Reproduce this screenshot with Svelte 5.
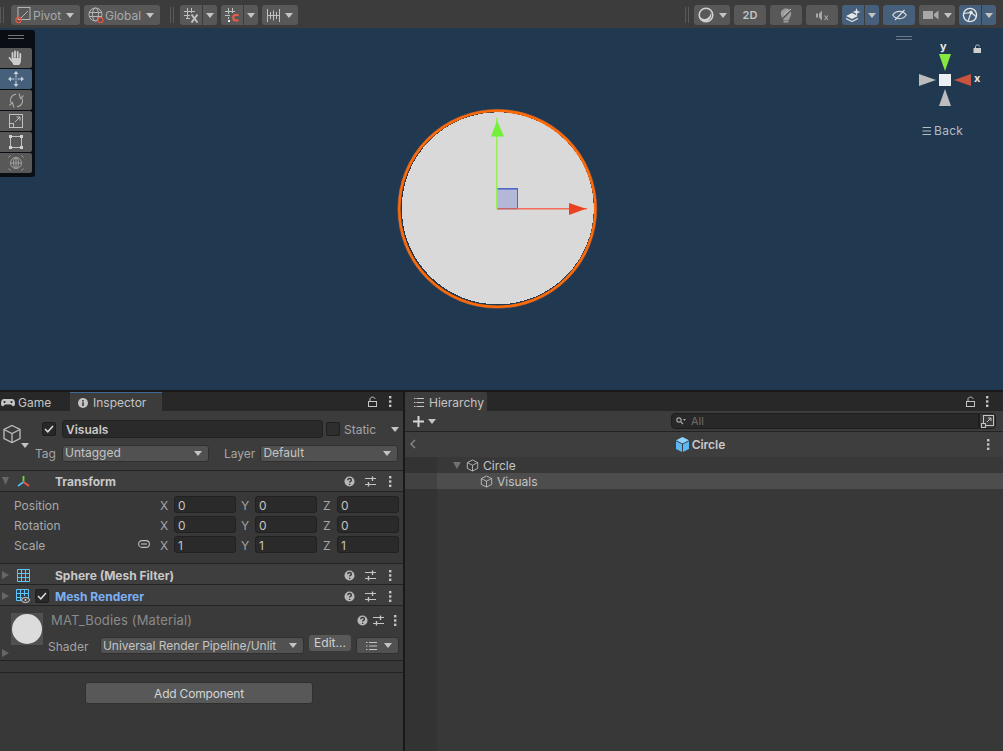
<script>
  const rows = [
    { label: 'Position', vals: ['0', '0', '0'] },
    { label: 'Rotation', vals: ['0', '0', '0'] },
    { label: 'Scale', vals: ['1', '1', '1'], link: true }
  ];
  const axes = ['X', 'Y', 'Z'];
</script>

{#snippet caret(color = '#c4c4c4')}
  <svg class="caret" width="8" height="5" viewBox="0 0 8 5"><path d="M0 0H8L4 5Z" fill={color} /></svg>
{/snippet}

{#snippet cube(size = 15, color = '#c4c4c4')}
  <svg width={size} height={size} viewBox="0 0 20 20" fill="none" stroke={color} stroke-width="1.3">
    <path d="M10 1.5L18 5.5V14.5L10 18.5L2 14.5V5.5Z" />
    <path d="M2 5.5L10 9.5L18 5.5M10 9.5V18.5" />
  </svg>
{/snippet}

{#snippet headerIcons()}
  <span class="hicons">
    <svg width="11" height="11" viewBox="0 0 11 11"><circle cx="5.5" cy="5.5" r="5" fill="#b8b8b8" /><path d="M3.7 4.2C3.8 2 7.4 2 7.4 4.2C7.4 5.4 5.6 5.4 5.6 6.6M5.6 7.8V9" stroke="#383838" stroke-width="1.4" fill="none" /></svg>
    <svg width="11" height="11" viewBox="0 0 11 11" stroke="#c4c4c4" stroke-width="1" fill="none"><path d="M0 2.5H11M0 8.5H11" /><path d="M7.5 0.5V5M3.5 6V10.5" stroke-width="1.4" /></svg>
    <svg class="hdots" width="3" height="11" viewBox="0 0 3 11" fill="#c4c4c4"><rect y="0" width="2.4" height="2.4" /><rect y="4.3" width="2.4" height="2.4" /><rect y="8.6" width="2.4" height="2.4" /></svg>
  </span>
{/snippet}

{#snippet lock()}
  <svg width="9" height="11" viewBox="0 0 9 11" fill="none" stroke="#c4c4c4"><path d="M2 5V3C2 0.5 7 0.5 7 3" /><rect x="0.5" y="5.5" width="8" height="5" /></svg>
{/snippet}

{#snippet vdots()}
  <svg width="3" height="11" viewBox="0 0 3 11" fill="#c4c4c4"><rect width="2.4" height="2.4" /><rect y="4.3" width="2.4" height="2.4" /><rect y="8.6" width="2.4" height="2.4" /></svg>
{/snippet}

{#snippet check()}
  <svg width="10" height="8" viewBox="0 0 10 8" fill="none" stroke="#dcdcdc" stroke-width="1.5"><path d="M1 4L3.8 6.8L9 1" /></svg>
{/snippet}

<div class="app">
  <header class="toolbar">
    <span class="grip"></span>
    <button class="btn pivot">
      <svg width="16" height="18" viewBox="0 0 16 18" fill="none"><rect x="3" y="1.5" width="12" height="12" stroke="#b5b5b5" /><path d="M4 14L13 5" stroke="#b5b5b5" /><circle cx="3.5" cy="14" r="2.6" stroke="#e8553f" stroke-width="1.2" /></svg>
      <span>Pivot</span>{@render caret()}
    </button>
    <button class="btn global">
      <svg width="16" height="17" viewBox="0 0 16 17" fill="none" stroke="#b5b5b5"><circle cx="7.5" cy="7.5" r="6.5" /><ellipse cx="7.5" cy="7.5" rx="3" ry="6.5" /><path d="M1 5.5H14M1 9.5H14" /><circle cx="12.5" cy="13" r="2.5" fill="#555" stroke="#e8553f" stroke-width="1.2" /></svg>
      <span>Global</span>{@render caret()}
    </button>
    <span class="grip g2"></span>
    <div class="split">
      <button class="btn part main">
        <svg width="15" height="15" viewBox="0 0 15 15" fill="none" stroke="#c0c0c0"><path d="M0 3.5H11M0 7.5H6M3.5 0V11M7.5 0V5M2 10.5H6" /><path d="M7.5 6.5L13.5 14.500M13.500 6.5L7.5 14.500" stroke-width="2" /></svg>
      </button>
      <button class="btn part drop">{@render caret()}</button>
    </div>
    <div class="split">
      <button class="btn part main">
        <svg width="15" height="15" viewBox="0 0 15 15" fill="none" stroke="#c0c0c0"><path d="M0 3.5H10M0 7.5H5M3.5 0V6M7.5 0V5M3.5 9V11" /><rect x="3" y="12" width="2" height="2" fill="#eee" stroke="none" /><path d="M13.5 7H10.5C7.5 7 7.5 12.5 10.5 12.5H13.5" stroke="#ef5b44" stroke-width="2" /></svg>
      </button>
      <button class="btn part drop">{@render caret()}</button>
    </div>
    <button class="btn ruler">
      <svg width="13" height="13" viewBox="0 0 13 13" fill="none" stroke="#c0c0c0"><path d="M.5 0V13M12.5 0V13M0 6.5H13M3.5 3V10M6.5 1.5V11.5M9.5 3V10" /></svg>
      {@render caret()}
    </button>

    <span class="spacer"></span>

    <span class="grip g3"></span>
    <button class="btn shade">
      <svg width="16" height="16" viewBox="0 0 16 16"><circle cx="8" cy="8" r="6.8" fill="none" stroke="#d0d0d0" stroke-width="1.6" /><path d="M1.5 9C4 14 12 13 13 5C14.5 10 11 15 7 14.5C4 14 2.5 12 1.5 9Z" fill="#d0d0d0" /></svg>
      {@render caret()}
    </button>
    <button class="btn icon two">2D</button>
    <button class="btn icon">
      <svg width="12" height="15" viewBox="0 0 12 15"><path d="M3 12C2.5 9 .8 8.5 .8 5.5C.8 2 4 .5 6 .5C9 .5 11.2 3 11.2 5.5C11.2 8.5 9.5 9 9 12Z" fill="#9c9c9c" /><rect x="3.5" y="12.5" width="5" height="2" fill="#9c9c9c" /><path d="M1 12.5L11 2" stroke="#555" stroke-width="1.6" /><path d="M4 6.5L11 1" stroke="#c8c8c8" /></svg>
    </button>
    <button class="btn icon">
      <svg width="13" height="11" viewBox="0 0 13 11"><path d="M0 3.5H2V7.5H0ZM3 3.5L6 .5V10.5L3 7.5Z" fill="#a8a8a8" /><path d="M8.5 5.5L12 10M12 5.5L8.5 10" stroke="#a8a8a8" stroke-width="1.1" /></svg>
    </button>
    <div class="split">
      <button class="btn part main blue">
        <svg width="16" height="14" viewBox="0 0 16 14"><path d="M1 8L7 5L13 8L7 11Z" fill="#e6e6e6" /><path d="M1 10.5L7 13.5L13 10.5" stroke="#e6e6e6" stroke-width="1.2" fill="none" /><path d="M11.5 0L12.5 3L15.5 4L12.5 5L11.5 8L10.5 5L7.5 4L10.5 3Z" fill="#e6e6e6" /></svg>
      </button>
      <button class="btn part drop blue">{@render caret()}</button>
    </div>
    <button class="btn icon blue">
      <svg width="15" height="12" viewBox="0 0 15 12" fill="none" stroke="#dcdcdc" stroke-width="1.1"><path d="M.7 6C4 1.2 11 1.2 14.3 6C11 10.8 4 10.8 .7 6Z" /><path d="M3 11L12.5 1" /></svg>
    </button>
    <button class="btn cam">
      <svg width="16" height="10" viewBox="0 0 16 10"><rect x="0" y="1" width="10" height="8" fill="#a8a8a8" /><path d="M11 4L15.5 .5V9.5L11 6Z" fill="#a8a8a8" /></svg>
      {@render caret()}
    </button>
    <div class="split">
      <button class="btn part main blue">
        <svg width="16" height="16" viewBox="0 0 16 16" fill="none" stroke="#e4e4e4"><circle cx="8" cy="8" r="6.6" stroke-width="1.4" /><path d="M2 6.5L9 5.5L14 9.5M9 5.5L6 14.5" stroke-width="1.2" /><circle cx="9" cy="5.5" r="1.4" fill="#e4e4e4" /></svg>
      </button>
      <button class="btn part drop blue">{@render caret()}</button>
    </div>
  </header>

  <main class="scene">
    <svg class="canvas" width="1003" height="362" viewBox="0 28 1003 362">
      <circle cx="497.3" cy="208.8" r="99.400" fill="none" stroke="#a8604a" stroke-opacity=".7" />
      <circle cx="497.800" cy="208.300" r="96" fill="#d9d9d9" shape-rendering="crispEdges" />
      <circle cx="497.3" cy="208.8" r="98" fill="none" stroke="#ff6a08" stroke-width="2.600" />
      <rect x="497" y="188.500" width="20.500" height="20.500" fill="#b4b8d8" />
      <path d="M517.500 188.500V209" fill="none" stroke="#4c68c8" />
      <path d="M497 188.800H518" stroke="#4c68c8" stroke-width="1.600" />
      <path d="M497 208.800H517" stroke="#c46060" stroke-width="1.500" />
      <path d="M517 208.800H587" stroke="#f56c58" stroke-width="1.500" />
      <path d="M569 203L586 208.800L569 215Z" fill="#ea4220" />
      <path d="M496.800 209V118" stroke="#96f050" stroke-width="1.500" />
      <path d="M497 120.500L504 136.500H491Z" fill="#74f03a" />

      <path d="M896 36.5H912M896 39.5H912" stroke="#6c7c8c" />
      <path d="M945 71L939 54H951Z" fill="#86e840" />
      <path d="M919 74L936 80L919 86Z" fill="#bdbdbd" />
      <path d="M971 74L954 80L971 86Z" fill="#c85440" />
      <path d="M945 89L951 106H939Z" fill="#bdbdbd" />
      <rect x="939" y="74" width="12" height="12" fill="#eceff2" />
      <path d="M922.500 127.500H931M922.500 131H931M922.500 134.500H931" stroke="#b4bcc4" />
      <rect x="973.500" y="48" width="7.500" height="5" fill="#d0d0d0" />
      <path d="M975.500 48V46.500C975.500 44.500 979.500 44.500 979.500 46.500" fill="none" stroke="#d0d0d0" />
    </svg>
    <span class="gz y">y</span>
    <span class="gz x">x</span>
    <span class="back">Back</span>

    <nav class="tools">
      <div class="tools-grip"></div>
      <button class="tool">
        <svg width="16" height="16" viewBox="0 0 16 16" fill="none" stroke="#cccccc" stroke-linecap="round" stroke-width="1.800"><path d="M1.500 8L4 11M4.500 8V3M7 7V1.500M9.700 7V2M12.300 8V4" /><path d="M4 8H13V10C13 13 12 14 11 15H5.500L3.500 11Z" fill="#cccccc" stroke="none" /></svg>
      </button>
      <button class="tool on">
        <svg width="16" height="16" viewBox="0 0 16 16"><path d="M8 2.500V6M8 10V13.500M2.500 8H6M10 8H13.500" stroke="#c8d0d8" fill="none" /><path d="M8 0L10.500 3H5.500ZM8 16L5.500 13H10.500ZM0 8L3 5.500V10.500ZM16 8L13 5.500V10.500Z" fill="#c8d0d8" /><rect x="6.500" y="6.500" width="3" height="3" fill="#6f8cae" /></svg>
      </button>
      <button class="tool">
        <svg width="15" height="15" viewBox="0 0 15 15" fill="none" stroke="#a8a8a8" stroke-width="1.100"><path d="M2.500 10.500A6 6 0 0 1 7 1.200" /><path d="M12.500 4.500A6 6 0 0 1 8 13.800" /><path d="M10 0.500L11.500 5.500L14.500 2.500M0.500 12.500L3.500 9.500L5 14.500" /></svg>
      </button>
      <button class="tool">
        <svg width="14" height="14" viewBox="0 0 14 14" fill="none" stroke="#c0c0c0"><rect x=".5" y=".5" width="13" height="13" /><rect x=".5" y="9.500" width="4" height="4" /><path d="M6 8L11 3M7.500 3H11V6.500" /></svg>
      </button>
      <button class="tool">
        <svg width="14" height="14" viewBox="0 0 14 14"><path d="M1.500 3V11M12.500 3V11M3 1.500H11M3 12.500H11" stroke="#c0c0c0" fill="none" /><g fill="#d0d0d0"><rect width="3" height="3" /><rect x="11" width="3" height="3" /><rect y="11" width="3" height="3" /><rect x="11" y="11" width="3" height="3" /></g></svg>
      </button>
      <button class="tool">
        <svg width="16" height="16" viewBox="0 0 16 16" fill="none" stroke="#a0a0a0"><circle cx="8" cy="8" r="5.500" /><path d="M8 2.500V13.500M2.500 8H13.500M5.500 8A2.500 5.500 0 0 1 10.500 8A2.500 5.500 0 0 1 5.500 8" /><path d="M.5 2.500L2.500 .5M13.500 .5L15.500 2.500M15.500 13.500L13.500 15.500M2.500 15.500L.5 13.500" /></svg>
      </button>
    </nav>
  </main>

  <div class="panels">
    <section class="panel inspector">
      <div class="tabbar">
        <div class="tab plain">
          <svg width="14" height="8" viewBox="0 0 14 8"><path d="M3 0H11C13 0 14 2 14 4.500C14 7 12.500 8 11 6.500L10 5.500H4L3 6.500C1.500 8 0 7 0 4.500C0 2 1 0 3 0Z" fill="#c4c4c4" /><circle cx="3.500" cy="3" r="1.100" fill="#282828" /><circle cx="10.500" cy="3" r="1.100" fill="#282828" /></svg>
          <span>Game</span>
        </div>
        <div class="tab active">
          <svg width="10" height="10" viewBox="0 0 10 10"><circle cx="5" cy="5" r="5" fill="#c4c4c4" /><rect x="4.200" y="4.200" width="1.600" height="3.800" fill="#383838" /><rect x="4.200" y="2" width="1.600" height="1.500" fill="#383838" /></svg>
          <span>Inspector</span>
        </div>
        <span class="tabtools">{@render lock()}{@render vdots()}</span>
      </div>

      <div class="objhead">
        <div class="objicon">
          {@render cube(20, '#bdbdbd')}
          <span class="objcaret">{@render caret()}</span>
        </div>
        <div class="objfields">
          <div class="namerow">
            <span class="cb">{@render check()}</span>
            <div class="field name">Visuals</div>
            <span class="cb empty"></span>
            <span class="muted static">Static</span>
            {@render caret()}
          </div>
          <div class="tagrow">
            <span class="muted tag">Tag</span>
            <div class="dropdown tagd"><span>Untagged</span>{@render caret()}</div>
            <span class="muted layer">Layer</span>
            <div class="dropdown layerd"><span>Default</span>{@render caret()}</div>
          </div>
        </div>
      </div>

      <div class="comphead transform">
        <svg class="fold" width="7" height="8" viewBox="0 0 7 8"><path d="M0 0H7L3.500 8Z" fill="#666" /></svg>
        <svg class="compicon" width="13" height="13" viewBox="0 0 13 13" fill="none" stroke-width="1.800"><path d="M6.500 6.500V1" stroke="#6fdc3c" /><path d="M6.500 7L12 11" stroke="#ee5a44" /><path d="M6.500 7L1 11" stroke="#4fb8f0" /></svg>
        <b>Transform</b>
        {@render headerIcons()}
      </div>
      <div class="transform-body">
        {#each rows as r}
          <div class="trow">
            <span class="tlabel">{r.label}</span>
            {#if r.link}
              <svg class="link" width="12" height="8" viewBox="0 0 12 8" fill="none" stroke="#c0c0c0" stroke-width="1.100"><rect x=".6" y=".6" width="10.800" height="6.800" rx="3.400" /><path d="M3 4H9" /></svg>
            {/if}
            {#each r.vals as v, i}
              <span class="axis a{i}">{axes[i]}</span>
              <span class="num n{i}">{v}</span>
            {/each}
          </div>
        {/each}
      </div>

      <div class="comphead mesh">
        <svg class="fold" width="7" height="8" viewBox="0 0 7 8"><path d="M0 0L7 4L0 8Z" fill="#666" /></svg>
        <svg class="compicon" width="13" height="13" viewBox="0 0 13 13" fill="none" stroke="#5cc4ff"><path d="M.5 .5H12.500V12.500H.5ZM.5 4.500H12.500M.5 8.500H12.500M4.500 .5V12.500M8.500 .5V12.500" /></svg>
        <b>Sphere (Mesh Filter)</b>
        {@render headerIcons()}
      </div>
      <div class="comphead mesh renderer">
        <svg class="fold" width="7" height="8" viewBox="0 0 7 8"><path d="M0 0L7 4L0 8Z" fill="#666" /></svg>
        <svg class="compicon" width="14" height="14" viewBox="0 0 14 14" fill="none" stroke="#5cc4ff"><path d="M.5 .5H12.500V9M.5 .5V11.500H5M.5 4.500H12.500M.5 8.500H6M4.500 .5V11.500M8.500 .5V7" /><ellipse cx="9.500" cy="11" rx="4" ry="2.500" fill="#3c3c3c" stroke="#d8d8d8" /><circle cx="9.500" cy="11" r="1" fill="#d8d8d8" stroke="none" /></svg>
        <span class="cb small">{@render check()}</span>
        <b class="blue-text">Mesh Renderer</b>
        {@render headerIcons()}
      </div>

      <div class="material">
        <div class="preview"><div class="ball"></div></div>
        <svg class="matfold" width="7" height="8" viewBox="0 0 7 8"><path d="M0 0L7 4L0 8Z" fill="#666" /></svg>
        <div class="matbody">
          <div class="mattitle"><span>MAT_Bodies (Material)</span>{@render headerIcons()}</div>
          <div class="shader">
            <span class="muted shlabel">Shader</span>
            <div class="dropdown shd"><span>Universal Render Pipeline/Unlit</span>{@render caret()}</div>
            <button class="edit">Edit...</button>
            <div class="dropdown menu">
              <svg width="11" height="8" viewBox="0 0 11 8" stroke="#c4c4c4" fill="none"><path d="M3 .5H11M3 4H11M3 7.500H11M0 .5H1.500M0 4H1.500M0 7.500H1.500" /></svg>
              {@render caret()}
            </div>
          </div>
        </div>
      </div>
      <div class="band"></div>
      <div class="addwrap"><button class="add">Add Component</button></div>
    </section>

    <section class="panel hierarchy">
      <div class="tabbar">
        <div class="tab active hier">
          <svg width="10" height="9" viewBox="0 0 10 9" stroke="#c4c4c4" fill="none"><path d="M2.500 .5H10M2.500 4.500H10M2.500 8.500H10M0 .5H1.500M0 4.500H1.500M0 8.500H1.500" /></svg>
          <span>Hierarchy</span>
        </div>
        <span class="tabtools">{@render lock()}{@render vdots()}</span>
      </div>
      <div class="htools">
        <svg width="13" height="13" viewBox="0 0 13 13" fill="#d4d4d4"><path d="M5.500 1H7.500V5.500H12V7.500H7.500V12H5.500V7.500H1V5.500H5.500Z" /></svg>
        {@render caret()}
        <span class="spacer"></span>
        <div class="search">
          <svg width="10" height="8" viewBox="0 0 10 8" fill="none" stroke="#a8a8a8" stroke-width="1.200"><circle cx="3" cy="3" r="2.200" /><path d="M5 5L7 7" /><path d="M7 2H10L8.500 4Z" fill="#a8a8a8" stroke="none" /></svg>
          <span>All</span>
        </div>
        <button class="expand">
          <svg width="13" height="13" viewBox="0 0 13 13" fill="none" stroke="#c4c4c4"><rect x="2.500" y=".5" width="10" height="10" /><rect x=".5" y="8.500" width="4" height="4" fill="#3c3c3c" /><path d="M6 7L10 3M7 3H10V6" /></svg>
        </button>
      </div>
      <div class="crumb">
        <svg class="backarrow" width="6" height="10" viewBox="0 0 6 10" fill="none" stroke="#888" stroke-width="1.400"><path d="M5 1L1 5L5 9" /></svg>
        <div class="crumbtitle">
          <svg width="13" height="15" viewBox="0 0 13 15"><path d="M6.500 0L13 3.200L6.500 6.500L0 3.200Z" fill="#8cd4ff" /><path d="M0 4.200L6 7.300V15L0 12Z" fill="#5cb8f4" /><path d="M13 4.200L7 7.300V15L13 12Z" fill="#5cb8f4" /></svg>
          <span>Circle</span>
        </div>
        <span class="crumbdots">{@render vdots()}</span>
      </div>
      <div class="tree">
        <div class="hrow">
          <svg class="hfold" width="8" height="7" viewBox="0 0 8 7"><path d="M0 0H8L4 7Z" fill="#707070" /></svg>
          {@render cube(13, '#c4c4c4')}
          <span>Circle</span>
        </div>
        <div class="hrow sel">
          {@render cube(13, '#c4c4c4')}
          <span>Visuals</span>
        </div>
      </div>
    </section>
  </div>
</div>

<style>
  :global(body) { margin: 0; background: #383838; }
  .app {
    width: 1003px;
    height: 751px;
    display: flex;
    flex-direction: column;
    overflow: hidden;
    font: 12px/15px Inter, "Liberation Sans", sans-serif;
    color: #c4c4c4;
  }
  button { font: inherit; color: inherit; border: 0; padding: 0; }
  svg { display: block; flex: none; }

  .toolbar {
    height: 28px;
    flex: none;
    box-sizing: border-box;
    padding: 5px 7px 3px 0;
    display: flex;
    align-items: flex-start;
    gap: 4px;
    background: #3c3c3c;
  }
  .spacer { flex: 1; }
  .grip { width: 4px; height: 16px; margin: 2px 3px 0 0; border-left: 1px solid #5a5a5a; border-right: 1px solid #5a5a5a; box-sizing: border-box; }
  .g2 { margin: 2px 2px 0 6px; }
  .g3 { margin-right: 1px; }
  .btn {
    height: 20px;
    display: flex;
    align-items: center;
    justify-content: center;
    gap: 5px;
    background: #585858;
    border-radius: 3px;
    color: #a8a8a8;
    box-sizing: border-box;
  }
  .btn.blue { background: #46607c; }
  .pivot, .global { justify-content: flex-start; padding-left: 4px; }
  .pivot { width: 69px; }
  .global { width: 76px; }
  .pivot span { margin-left: -3px; }
  .global span { margin-left: -4px; }
  .split { display: flex; gap: 1px; flex: none; }
  .part.main { width: 22px; border-radius: 3px 0 0 3px; }
  .part.drop { width: 14px; border-radius: 0 3px 3px 0; }
  .ruler, .shade, .cam { width: 36px; }
  .icon { width: 32px; }
  .two { font-size: 11px; font-weight: 600; color: #c4c4c4; }

  .scene {
    position: relative;
    height: 362px;
    flex: none;
    background: #203850;
    overflow: hidden;
  }
  .canvas { position: absolute; left: 0; top: 0; }
  .gz { position: absolute; font-weight: 700; font-size: 11px; line-height: 11px; color: #e6e6e6; }
  .gz.y { left: 940px; top: 13px; }
  .gz.x { left: 974px; top: 45px; }
  .back { position: absolute; left: 934px; top: 95px; color: #b4bcc4; letter-spacing: .3px; }

  .tools {
    position: absolute;
    left: 0;
    top: 2px;
    width: 35px;
    height: 147px;
    box-sizing: border-box;
    background: #0a0e14;
    border-radius: 0 3px 3px 0;
    padding-right: 3px;
    display: flex;
    flex-direction: column;
    gap: 1px;
  }
  .tools-grip { height: 17px; position: relative; }
  .tools-grip::after {
    content: "";
    position: absolute;
    left: 8px;
    top: 5px;
    width: 16px;
    height: 4px;
    box-sizing: border-box;
    border-top: 1px solid #70757a;
    border-bottom: 1px solid #70757a;
  }
  .tool {
    height: 20px;
    background: #585858;
    display: flex;
    align-items: center;
    justify-content: center;
    border-radius: 0 2px 2px 0;
  }
  .tool.on { background: #46607c; }

  .panels {
    flex: 1;
    display: flex;
    border-top: 2px solid #191919;
    background: #191919;
    min-height: 0;
  }
  .panel { background: #383838; display: flex; flex-direction: column; min-width: 0; }
  .inspector { width: 403px; flex: none; }
  .hierarchy { flex: 1; margin-left: 2px; }

  .tabbar {
    height: 19px;
    flex: none;
    display: flex;
    background: #282828;
  }
  .tab { display: flex; align-items: center; gap: 4px; height: 19px; box-sizing: border-box; padding-top: 2px; }
  .tab.plain { width: 70px; padding-left: 1px; gap: 3px; }
  .tab.active {
    width: 92px;
    justify-content: flex-start;
    padding-left: 8px;
    gap: 5px;
    background: #3c3c3c;
    box-shadow: inset 0 1px 0 #3b6a98;
  }
  .tab.hier { width: 82px; padding-left: 9px; box-shadow: none; border-radius: 2px 2px 0 0; }
  .tabtools { margin-left: auto; padding-right: 11px; display: flex; align-items: center; gap: 12px; }
  .hierarchy .tabtools { padding-right: 14px; gap: 11px; }

  .objhead {
    height: 60px;
    flex: none;
    box-sizing: border-box;
    display: flex;
    background: #3c3c3c;
    border-bottom: 1px solid #232323;
    padding-top: 10px;
  }
  .objicon { width: 42px; position: relative; padding: 3px 0 0 2px; box-sizing: border-box; flex: none; }
  .objcaret { position: absolute; left: 21px; top: 22px; }
  .objfields { flex: 1; min-width: 0; }
  .namerow { display: flex; align-items: center; height: 18px; margin-top: -1px; }
  .namerow .field { padding-top: 1px; }
  .cb {
    width: 14px; height: 14px; box-sizing: border-box;
    background: #282828; border: 1px solid #1e1e1e; border-radius: 2px;
    display: flex; align-items: center; justify-content: center; flex: none;
  }
  .cb.empty { background: #2e2e2e; margin-left: 3px; }
  .field.name {
    width: 261px; height: 18px; box-sizing: border-box; margin-left: 6px;
    background: #2a2a2a; border: 1px solid #212121; border-radius: 3px;
    padding-left: 3px; line-height: 15px; font-weight: 600; color: #c8c8c8;
  }
  .muted { color: #a4a4a4; }
  .static { margin: 0 15px 0 4px; }
  .tagrow { display: flex; align-items: center; margin-top: 7px; margin-left: -7px; height: 17px; }
  .tag { width: 27px; }
  .dropdown {
    height: 17px; box-sizing: border-box;
    background: #515151; border: 1px solid #303030; border-radius: 3px;
    display: flex; align-items: center; justify-content: space-between;
    padding: 0 6px 0 2px; color: #c4c4c4; flex: none;
  }
  .dropdown span { margin-top: -2px; }
  .tagd { width: 147px; }
  .layer { margin: 0 5px 0 15px; }
  .layerd { width: 138px; }

  .comphead {
    height: 21px;
    flex: none;
    box-sizing: border-box;
    display: flex;
    align-items: center;
    background: #3e3e3e;
    border-bottom: 1px solid #232323;
    position: relative;
  }
  .comphead.mesh { padding-top: 2px; }
  .comphead b { font-weight: 700; color: #c8c8c8; position: absolute; left: 55px; font-size: 12px; }
  .comphead .blue-text { color: #7cb0f4; }
  .fold { margin-left: 2px; }
  .compicon { margin-left: 8px; }
  .renderer .compicon { margin-left: 7px; }
  .renderer .cb { margin-left: 5px; }
  .hicons { margin-left: auto; display: flex; align-items: center; gap: 10px; padding-right: 11px; }
  .hdots { margin-left: 3px; }
  .transform-body {
    height: 72px;
    flex: none;
    box-sizing: border-box;
    padding-top: 4px;
    border-bottom: 1px solid #232323;
    background: #383838;
  }
  .trow { height: 17px; margin-bottom: 3px; position: relative; }
  .tlabel { position: absolute; left: 14px; top: 2px; color: #a8a8a8; }
  .link { position: absolute; left: 138px; top: 4px; }
  .axis { position: absolute; top: 2px; color: #a4a4a4; }
  .a0 { left: 160px; } .a1 { left: 241px; } .a2 { left: 323px; }
  .num {
    position: absolute; top: 0; height: 17px; box-sizing: border-box;
    background: #2a2a2a; border: 1px solid #212121; border-radius: 3px;
    padding: 1px 0 0 3px; line-height: 15px; color: #c4c4c4;
  }
  .n0 { left: 174px; width: 62px; } .n1 { left: 255px; width: 62px; } .n2 { left: 337px; width: 62px; }

  .material {
    height: 55px;
    flex: none;
    box-sizing: border-box;
    border-bottom: 1px solid #232323;
    background: #3a3a3a;
    position: relative;
  }
  .preview {
    position: absolute; left: 11px; top: 7px; width: 32px; height: 32px;
    background: #505050; display: flex; align-items: center; justify-content: center;
  }
  .ball { width: 30px; height: 30px; border-radius: 50%; background: #dcdcdc; }
  .matfold { position: absolute; left: 2px; top: 43px; }
  .matbody { position: absolute; left: 51px; right: 0; top: 6px; }
  .mattitle { display: flex; align-items: center; height: 17px; color: #8a8a8a; font-size: 13px; letter-spacing: .15px; }
  .mattitle .hicons { padding-right: 6px; gap: 5px; }
  .mattitle .hdots { margin-left: 5px; }
  .shader { display: flex; align-items: flex-start; margin-top: 8px; margin-left: -3px; }
  .shlabel { width: 52px; margin-top: 2px; }
  .shd { width: 204px; padding-left: 2px; letter-spacing: -.06px; }
  .shd span { margin-top: 0; }
  .edit {
    width: 42px; height: 16px; margin: -2px 5px 0 5px;
    background: #585858; border-radius: 3px; line-height: 14px; color: #d0d0d0;
  }
  .menu { width: 43px; padding: 0 6px 0 9px; }
  .band { height: 12px; flex: none; box-sizing: border-box; border-bottom: 1px solid #232323; background: #383838; }
  .addwrap { flex: 1; display: flex; justify-content: center; align-items: flex-start; }
  .add {
    width: 228px; height: 22px; margin: 9px 6px 0 0; padding-left: 1px;
    background: #585858; border: 1px solid #303030; border-radius: 3px;
    color: #d4d4d4; box-sizing: border-box; letter-spacing: -.2px;
  }

  .htools {
    height: 21px;
    flex: none;
    box-sizing: border-box;
    display: flex;
    align-items: center;
    gap: 3px;
    padding: 0 7px;
    background: #3c3c3c;
    border-bottom: 1px solid #232323;
  }
  .search {
    width: 308px; height: 16px; box-sizing: border-box;
    background: #282828; border: 1px solid #1e1e1e; border-radius: 4px 0 0 4px;
    display: flex; align-items: center; gap: 5px; padding-left: 4px;
    color: #6c6c6c; margin-right: -3px; font-size: 11px;
  }
  .expand {
    width: 17px; height: 16px; background: #3c3c3c; border: 1px solid #1e1e1e; border-radius: 0 4px 4px 0;
    display: flex; align-items: center; justify-content: center; box-sizing: border-box;
  }
  .crumb {
    height: 25px;
    flex: none;
    background: #3e3e3e;
    position: relative;
    display: flex;
    align-items: center;
    justify-content: center;
  }
  .backarrow { position: absolute; left: 5px; top: 7px; }
  .crumbtitle { display: flex; align-items: center; gap: 3px; margin-left: -7px; font-weight: 600; color: #c8c8c8; }
  .crumbdots { position: absolute; right: 13px; top: 7px; }
  .tree { flex: 1; background: #383838; box-shadow: inset 32px 0 0 #333333; }
  .hrow { height: 16px; display: flex; align-items: center; gap: 4px; padding-left: 48px; color: #c4c4c4; box-sizing: border-box; }
  .hfold { margin-right: 1px; }
  .hrow.sel { padding-left: 75px; background: linear-gradient(90deg, #424242 32px, #4d4d4d 32px); }
</style>
